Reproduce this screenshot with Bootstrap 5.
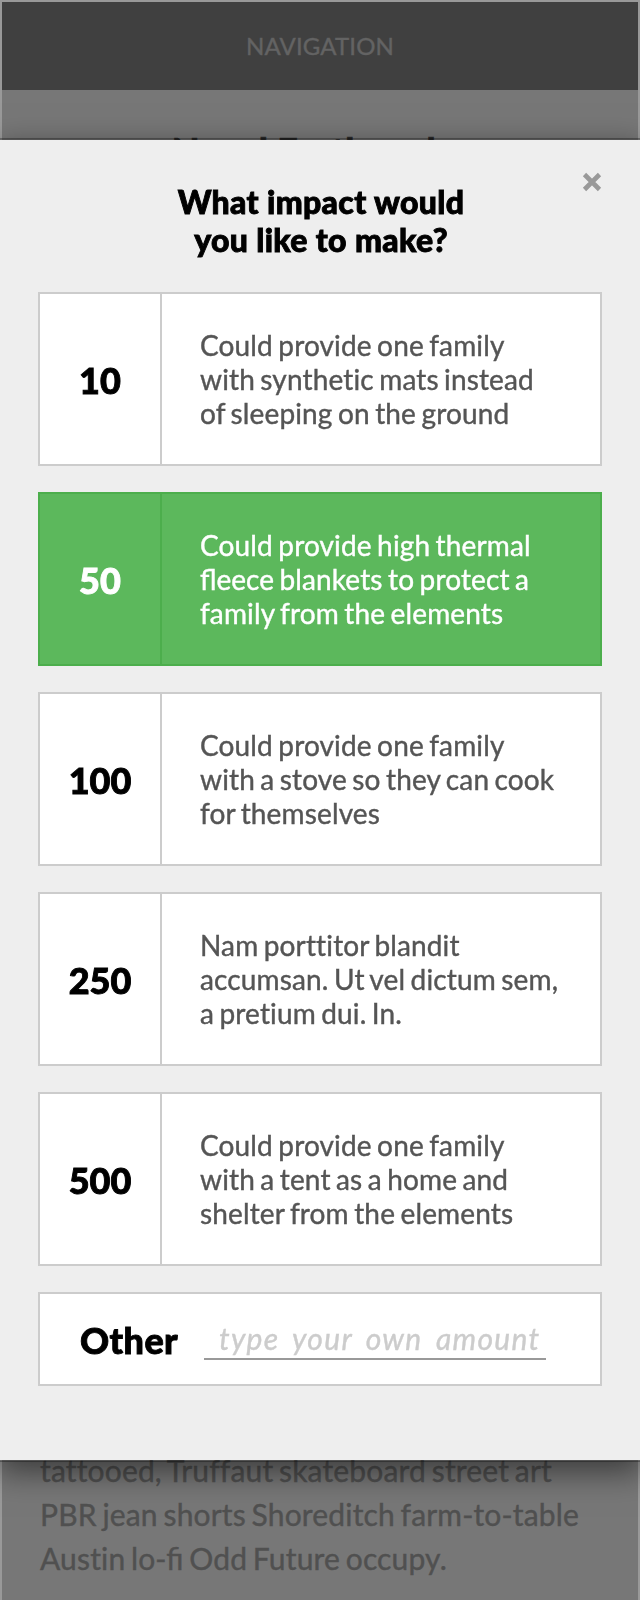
<!DOCTYPE html>
<html lang="en">
<head>
<meta charset="utf-8">
<meta name="viewport" content="width=device-width, initial-scale=1">
<title>Nepal Earthquake</title>
<link href="https://cdn.jsdelivr.net/npm/bootstrap@5.3.0/dist/css/bootstrap.min.css" rel="stylesheet">
<style>
body { font-family: Lato, "Liberation Sans", sans-serif; background: #777; font-variant-ligatures: none; }
.lig { font-variant-ligatures: normal; letter-spacing: 0; }
.page { height: 1600px; background: #777; border: 2px solid #999; border-bottom: 0; }
.topbar { height: 88px; background: #404040; color: #636363; font-size: 24px; letter-spacing: .15px; -webkit-text-stroke: .4px; }
.page-title { margin-top: 38px; font-size: 36px; line-height: 44px; font-weight: 900; color: #2b2b2b; letter-spacing: .4px; padding-right: 3px; -webkit-text-stroke: .6px; }
.story { padding: 0 30px 20px 38px; font-size: 30px; line-height: 44px; color: #505050; letter-spacing: .16px; word-spacing: -2.1px; -webkit-text-stroke: .4px; }
.modal-dialog { margin: 138px 0 0; max-width: none; }
.modal-content { margin: 0 -2px; width: auto; height: 1324px; border: 2px solid rgba(0,0,0,.3); border-radius: 0; background: #eee; background-clip: padding-box; box-shadow: 0 10px 30px rgba(0,0,0,.5); padding: 0 38px; }
.impact-title { margin: 43px 0 33px; padding-left: 2px; font-size: 32px; line-height: 38px; font-weight: 900; color: #000; letter-spacing: .35px; -webkit-text-stroke: .9px; }
.close-x { position: absolute; top: 32px; right: 38px; width: 20px; height: 20px; line-height: 0; }
.option { height: 174px; border: 2px solid #ccc; background: #fff; color: #555; }
.option .amount { width: 122px; border-right: 2px solid #ccc; font-size: 36px; font-weight: 900; color: #000; padding-top: 1px; -webkit-text-stroke: .9px; }
.option .desc { padding-left: 38px; font-size: 28px; line-height: 34px; white-space: nowrap; letter-spacing: .14px; word-spacing: -1.9px; -webkit-text-stroke: .4px; }
.option.chosen, .option.chosen .amount { border-color: #4cae4c; color: #fff; }
.option.chosen { background: #5cb85c; }
.options { gap: 26px; }
.other { height: 94px; border: 2px solid #ccc; background: #fff; padding: 0 54px 0 40px; }
.other label { width: 124px; font-size: 36px; font-weight: 900; color: #000; padding-top: 1px; letter-spacing: .4px; -webkit-text-stroke: .9px; }
.other input { min-width: 0; height: 41px; padding: 0 0 0 15px; border: 0; border-bottom: 2px solid #999; outline: 0; font: italic 30px Lato, cursive; letter-spacing: 1.3px; word-spacing: 5px; }
.other input::placeholder { color: #ccc; opacity: 1; -webkit-text-stroke: .4px; }
</style>
</head>
<body>
<div class="page d-flex flex-column overflow-hidden">
  <nav class="topbar d-flex align-items-center justify-content-center">NAVIGATION</nav>
  <h1 class="page-title text-center mb-0">Nepal Earthquake</h1>
  <p class="story mt-auto mb-0">tattooed, Truffaut skateboard street art<br>PBR jean shorts Shoreditch farm-to-table<br>Austin <span class="lig">lo-fi</span> Odd Future occupy.</p>
</div>

<div class="modal show d-block overflow-hidden" tabindex="-1" role="dialog" aria-labelledby="impactTitle">
  <div class="modal-dialog">
    <div class="modal-content">
      <button type="button" class="close-x btn p-0 border-0" aria-label="Close">
        <svg width="20" height="20" viewBox="0 0 20 20"><path d="M2.5 2.5L17.5 17.5M17.5 2.5L2.5 17.5" stroke="#999" stroke-width="4.6"/></svg>
      </button>
      <h2 id="impactTitle" class="impact-title text-center">What impact would<br>you like to make?</h2>
      <div class="options d-flex flex-column">
        <div class="option d-flex">
          <div class="amount d-flex align-items-center justify-content-center">10</div>
          <div class="desc align-self-center">Could provide one family<br>with synthetic mats instead<br>of sleeping on the ground</div>
        </div>
        <div class="option chosen d-flex">
          <div class="amount d-flex align-items-center justify-content-center">50</div>
          <div class="desc align-self-center">Could provide high thermal<br><span class="lig">fleece</span> blankets to protect a<br>family from the elements</div>
        </div>
        <div class="option d-flex">
          <div class="amount d-flex align-items-center justify-content-center">100</div>
          <div class="desc align-self-center">Could provide one family<br>with a stove so they can cook<br>for themselves</div>
        </div>
        <div class="option d-flex">
          <div class="amount d-flex align-items-center justify-content-center">250</div>
          <div class="desc align-self-center">Nam porttitor blandit<br>accumsan. Ut vel dictum sem,<br>a pretium dui. In.</div>
        </div>
        <div class="option d-flex">
          <div class="amount d-flex align-items-center justify-content-center">500</div>
          <div class="desc align-self-center">Could provide one family<br>with a tent as a home and<br>shelter from the elements</div>
        </div>
        <div class="other d-flex align-items-center">
          <label for="own" class="flex-shrink-0">Other</label>
          <input id="own" class="flex-grow-1" type="text" placeholder="type your own amount">
        </div>
      </div>
    </div>
  </div>
</div>
<script src="https://cdn.jsdelivr.net/npm/bootstrap@5.3.0/dist/js/bootstrap.bundle.min.js"></script>
</body>
</html>
